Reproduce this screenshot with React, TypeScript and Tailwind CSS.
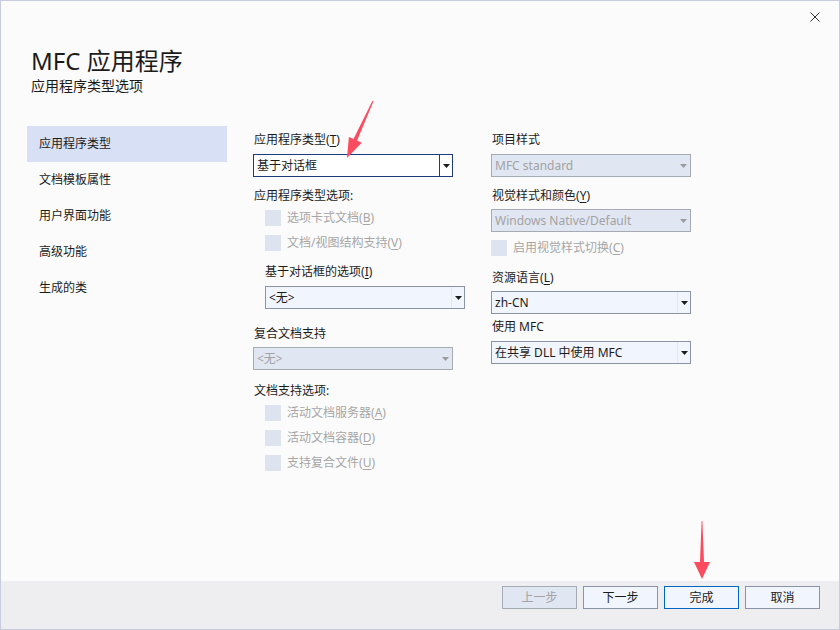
import React from "react";

const FONT = { fontFamily: '"Noto Sans", "Noto Sans CJK SC", sans-serif' };

type Variant = "focused" | "normal" | "disabled";

function Arrow({ color }: { color: string }) {
  return (
    <svg width="7" height="4" viewBox="0 0 7 4">
      <path d="M0 0 H7 L3.5 4 Z" fill={color} />
    </svg>
  );
}

function Acc({ text, k }: { text: string; k?: string }) {
  if (!k) return <>{text}</>;
  return (
    <>
      {text}(<span className="underline underline-offset-2">{k}</span>)
    </>
  );
}

function Combo({ text, variant, className = "" }: { text: string; variant: Variant; className?: string }) {
  const box =
    variant === "focused"
      ? "bg-white border-[#1f3b7c]"
      : variant === "normal"
      ? "bg-[#f1f5fd] border-[#8a93a7]"
      : "bg-[#e0e6f2] border-[#a6aab2]";
  const sep =
    variant === "focused" ? "border-l border-[#1f3b7c]" : variant === "normal" ? "border-l border-[#e2e8f2]" : "";
  const txt = variant === "disabled" ? "text-[#a3a3a3]" : "text-[#1b1b1b]";
  return (
    <div className={`flex h-[23px] w-[200px] border ${box} ${className}`}>
      <div className={`flex flex-1 items-center pl-[3px] text-[12px] leading-[16px] ${txt}`}>{text}</div>
      <div className={`flex w-[13px] items-center justify-center ${sep}`}>
        <Arrow color={variant === "disabled" ? "#9c9c9c" : "#1b1b1b"} />
      </div>
    </div>
  );
}

function Check({ text, k, className = "" }: { text: string; k?: string; className?: string }) {
  return (
    <div className={`flex h-[16px] items-center gap-[6px] ${className}`}>
      <div className="h-[16px] w-[16px] bg-[#dde4f0]" />
      <span className="text-[12px] leading-[16px] text-[#a6a6a6]">
        <Acc text={text} k={k} />
      </span>
    </div>
  );
}

function Label({ text, k, className = "" }: { text: string; k?: string; className?: string }) {
  return (
    <div className={`h-[16px] text-[12px] leading-[16px] text-[#1b1b1b] ${className}`}>
      <Acc text={text} k={k} />
    </div>
  );
}

function Btn({ text, kind }: { text: string; kind: "disabled" | "normal" | "default" }) {
  const cls =
    kind === "disabled"
      ? "bg-[#e0e6f2] border-[#a6aab2] text-[#a3a3a3]"
      : kind === "default"
      ? "bg-[#f1f5fd] border-[#0067c0] text-[#1b1b1b]"
      : "bg-[#f1f5fd] border-[#8a93a7] text-[#1b1b1b]";
  return (
    <div className={`flex h-[23px] w-[75px] items-center justify-center border text-[12px] leading-[16px] ${cls}`}>
      {text}
    </div>
  );
}

export default function App() {
  const nav = ["应用程序类型", "文档模板属性", "用户界面功能", "高级功能", "生成的类"];
  return (
    <div style={FONT} className="relative flex h-[630px] w-[840px] flex-col border border-[#c9cce0] bg-[#fbfbfb]">
      {/* close */}
      <svg className="absolute left-[809px] top-[11px]" width="10" height="10" viewBox="0 0 10 10">
        <path d="M0.5 0.5 L9.5 9.5 M9.5 0.5 L0.5 9.5" stroke="#333" strokeWidth="1" />
      </svg>

      <div className="flex-1">
        <div className="pl-[30px] pt-[44px]">
          <div className="text-[24px] leading-[32px] text-[#1b1b1b]">MFC 应用程序</div>
          <div className="text-[14px] leading-[18px] text-[#1b1b1b]">应用程序类型选项</div>
        </div>

        <div className="mt-[31px] flex pl-[26px]">
          <div className="flex w-[200px] flex-col">
            {nav.map((n, i) => (
              <div
                key={n}
                className={`flex h-[36px] items-center pl-[12px] text-[12px] text-[#1b1b1b] ${
                  i === 0 ? "bg-[#d8e0f6]" : ""
                }`}
              >
                {n}
              </div>
            ))}
          </div>

          {/* column 1 */}
          <div className="ml-[26px] flex w-[212px] flex-col pt-[6px]">
            <Label text="应用程序类型" k="T" className="pl-[1px]" />
            <Combo text="基于对话框" variant="focused" className="mt-[6px]" />
            <Label text="应用程序类型选项:" className="mt-[11px] pl-[1px]" />
            <Check text="选项卡式文档" k="B" className="ml-[12px] mt-[6px]" />
            <Check text="文档/视图结构支持" k="V" className="ml-[12px] mt-[9px]" />
            <Label text="基于对话框的选项" k="I" className="ml-[12px] mt-[13px]" />
            <Combo text="<无>" variant="normal" className="ml-[12px] mt-[6px]" />
            <Label text="复合文档支持" className="mt-[17px] pl-[1px]" />
            <Combo text="<无>" variant="disabled" className="mt-[5px]" />
            <Label text="文档支持选项:" className="mt-[13px] pl-[1px]" />
            <Check text="活动文档服务器" k="A" className="ml-[12px] mt-[6px]" />
            <Check text="活动文档容器" k="D" className="ml-[12px] mt-[9px]" />
            <Check text="支持复合文件" k="U" className="ml-[12px] mt-[9px]" />
          </div>

          {/* column 2 */}
          <div className="ml-[26px] flex w-[200px] flex-col pt-[6px]">
            <Label text="项目样式" className="pl-[1px]" />
            <Combo text="MFC standard" variant="disabled" className="mt-[6px]" />
            <Label text="视觉样式和颜色" k="Y" className="mt-[11px] pl-[1px]" />
            <Combo text="Windows Native/Default" variant="disabled" className="mt-[5px]" />
            <Check text="启用视觉样式切换" k="C" className="mt-[8px]" />
            <Label text="资源语言" k="L" className="mt-[14px] pl-[1px]" />
            <Combo text="zh-CN" variant="normal" className="mt-[5px]" />
            <Label text="使用 MFC" className="mt-[5px] pl-[1px]" />
            <Combo text="在共享 DLL 中使用 MFC" variant="normal" className="mt-[6px]" />
          </div>
        </div>
      </div>

      <div className="flex h-[48px] justify-end gap-[6px] bg-[#eeeef0] pr-[19px] pt-[5px]">
        <Btn text="上一步" kind="disabled" />
        <Btn text="下一步" kind="normal" />
        <Btn text="完成" kind="default" />
        <Btn text="取消" kind="normal" />
      </div>

      {/* annotation arrows */}
      <svg className="pointer-events-none absolute left-0 top-0" width="840" height="630" viewBox="0 0 840 630">
        <path d="M371.5 99.8 L352.5 138 L347.9 135.9 L346 157 L360.7 141.7 L356.1 139.6 L372.5 100.2 Z" fill="#fa4b5f" />
        <path d="M700.6 520 L699 561 L693 561 L701 578 L709 561 L703 561 L701.4 520 Z" fill="#fa4b5f" />
      </svg>
    </div>
  );
}
